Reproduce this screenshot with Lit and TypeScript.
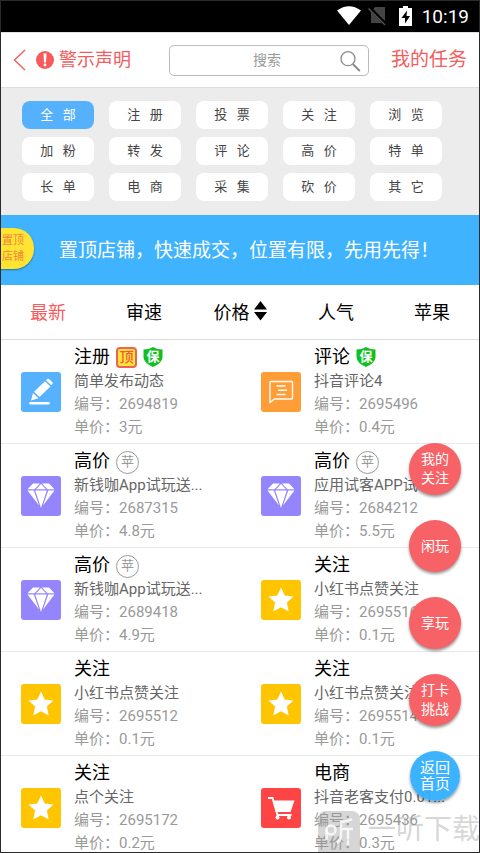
import { LitElement, html, css, svg, TemplateResult } from "lit";
import { customElement, property } from "lit/decorators.js";
import { classMap } from "lit/directives/class-map.js";

type Kind = "pencil" | "comment" | "gem" | "star" | "cart";
type Badge = "top" | "safe" | "apple";

interface Task {
  kind: Kind;
  title: string;
  badges: Badge[];
  desc: string;
  id: string;
  price: string;
}

const CATEGORIES = [
  "全部", "注册", "投票", "关注", "浏览",
  "加粉", "转发", "评论", "高价", "特单",
  "长单", "电商", "采集", "砍价", "其它",
];

const TASKS: Task[] = [
  { kind: "pencil", title: "注册", badges: ["top", "safe"], desc: "简单发布动态", id: "2694819", price: "3元" },
  { kind: "comment", title: "评论", badges: ["safe"], desc: "抖音评论4", id: "2695496", price: "0.4元" },
  { kind: "gem", title: "高价", badges: ["apple"], desc: "新钱咖App试玩送...", id: "2687315", price: "4.8元" },
  { kind: "gem", title: "高价", badges: ["apple"], desc: "应用试客APP试...", id: "2684212", price: "5.5元" },
  { kind: "gem", title: "高价", badges: ["apple"], desc: "新钱咖App试玩送...", id: "2689418", price: "4.9元" },
  { kind: "star", title: "关注", badges: [], desc: "小红书点赞关注", id: "2695516", price: "0.1元" },
  { kind: "star", title: "关注", badges: [], desc: "小红书点赞关注", id: "2695512", price: "0.1元" },
  { kind: "star", title: "关注", badges: [], desc: "小红书点赞关注", id: "2695514", price: "0.1元" },
  { kind: "star", title: "关注", badges: [], desc: "点个关注", id: "2695172", price: "0.2元" },
  { kind: "cart", title: "电商", badges: [], desc: "抖音老客支付0.01...", id: "2695436", price: "0.3元" },
];

const GLYPHS: Record<Kind, TemplateResult> = {
  pencil: svg`
    <path d="M10 28.500l2-7.500 5.500 5.200z" fill="#fff"/>
    <path d="M13 19.800L24 9.200l5.400 5.200L18.500 25z" fill="#fff"/>
    <path d="M25 8.200l1.200-1.100q.9-.8 1.800 0l3.400 3.200q.9.900 0 1.800l-1.100 1.200z" fill="#fff"/>
    <path d="M9.500 31.200h18" stroke="#fff" stroke-width="2.600" stroke-linecap="round"/>`,
  comment: svg`
    <path d="M10 9.500h20.500q1 0 1 1v15.500q0 1-1 1H13.500L9 30.500V10.500q0-1 1-1z" fill="none" stroke="#fff" stroke-width="1.400" stroke-linejoin="round"/>
    <path d="M15.500 14h9M17 18.200h9M15.500 22.400h9" stroke="#fff" stroke-width="1.500"/>`,
  gem: svg`
    <path d="M12 7.500h7l-5.500 5.700H6.500zM20 8l5 5.200H15zM21 7.500h7l5.500 5.700h-7zM6.500 14.600h6.300L18 29.500zM14.200 14.600h11.600L20 32zM27.200 14.600h6.300L22 29.500z" fill="#fff"/>`,
  star: svg`
    <path d="M20 7.500l3.700 8 8.800 1-6.600 6 1.800 9L20 27.200l-7.700 4.300 1.800-9-6.600-6 8.800-1z" fill="#fff"/>`,
  cart: svg`
    <path d="M7 10h4.500l5 17h14" fill="none" stroke="#fff" stroke-width="2"/>
    <path d="M12 12.500h21.500l-4 11.500H15.500z" fill="#fff"/>
    <circle cx="16.500" cy="29.600" r="2" fill="#fff"/><circle cx="28" cy="29.600" r="2" fill="#fff"/>`,
};

const FONT = css`Roboto, "Noto Sans CJK SC", sans-serif`;

@customElement("task-card")
export class TaskCard extends LitElement {
  @property({ attribute: false }) task!: Task;

  static styles = css`
    :host { display: flex; gap: 13px; padding: 4px 0 4px 21px; border-bottom: 1px solid #e8e8e8; min-width: 0; }
    .tile { flex: none; width: 40px; height: 40px; margin-top: 28px; border-radius: 3px; }
    .pencil { background: #56b1ff; }
    .comment { background: #ff9d36; }
    .gem { background: #9485fd; }
    .star { background: #ffc501; }
    .cart { background: #fe4444; }
    .info { min-width: 0; white-space: nowrap; }
    .head { display: flex; align-items: center; gap: 6px; height: 26px; }
    h2 { margin: 0; font: 400 18px/26px ${FONT}; color: #000; }
    p { margin: 0; font: 400 15px/23px ${FONT}; color: #999; }
    .desc { color: #666; }
    .badge { flex: none; box-sizing: border-box; font: 500 14px/17px ${FONT}; text-align: center; }
    .top { width: 21px; height: 21px; border: 2px solid #ef6352; border-radius: 4px; background: #ffe53b; color: #ee5b3f; }
    .apple { width: 23px; height: 23px; margin-top: 2px; border: 1px solid #999; border-radius: 50%; color: #999; font-size: 13px; font-weight: 400; line-height: 20px; }
    .safe { position: relative; width: 20px; height: 20px; color: #fff; font-size: 13px; line-height: 19px; font-weight: 700; }
    .safe svg { position: absolute; inset: 0; }
    .safe span { position: relative; }
  `;

  private badge(b: Badge) {
    if (b === "top") return html`<span class="badge top">顶</span>`;
    if (b === "apple") return html`<span class="badge apple">苹</span>`;
    return html`<span class="badge safe">
      <svg width="20" height="20" viewBox="0 0 20 20" aria-hidden="true"><path d="M10 0q4 2.500 9.500 2.500v8Q19 16 10 20 1 16 .5 10.500v-8Q6 2.500 10 0z" fill="#10c020"/></svg><span>保</span>
    </span>`;
  }

  render() {
    const t = this.task;
    return html`
      <svg class="tile ${t.kind}" viewBox="0 0 40 40" aria-hidden="true">${GLYPHS[t.kind]}</svg>
      <div class="info">
        <div class="head"><h2>${t.title}</h2>${t.badges.map((b) => this.badge(b))}</div>
        <p class="desc">${t.desc}</p>
        <p>编号：${t.id}</p>
        <p>单价：${t.price}</p>
      </div>`;
  }
}

@customElement("app-root")
export class AppRoot extends LitElement {
  static styles = css`
    :host { display: block; position: relative; height: 100vh; overflow: hidden; background: #fff; font-family: ${FONT}; color: #000; }
    :host::after { content: ""; position: absolute; inset: 0; border: 1px solid #2b2b2b; pointer-events: none; }
    button { border: 0; padding: 0; margin: 0; background: none; font: inherit; color: inherit; cursor: pointer; }
    button svg { display: block; }
    a { color: inherit; text-decoration: none; }
    .status { display: flex; align-items: center; justify-content: flex-end; height: 32px; padding-right: 11px; background: #000; color: #fff; font-size: 19px; }
    .status svg { flex: none; }
    .header { display: flex; align-items: center; box-sizing: border-box; height: 56px; padding: 0 13px; border-top: 1px solid #e0e0e0; border-bottom: 1px solid #dcdcdc; color: #f45c5e; }
    .warn { display: flex; align-items: center; gap: 5px; margin-left: 10px; font-size: 18px; line-height: 26px; }
    .search { position: relative; flex: 1; margin: 0 22px 0 38px; }
    .search input { display: block; box-sizing: border-box; width: 100%; height: 31px; padding: 0 32px 0 28px; border: 1px solid #bbb; border-radius: 5px; outline: 0; background: #fff; text-align: center; font: 400 14px/20px ${FONT}; }
    .search input::placeholder { color: #999; opacity: 1; }
    .search svg { position: absolute; right: 8px; top: 6px; }
    .mine { font-size: 19px; line-height: 28px; }
    .cats { display: grid; grid-template-columns: repeat(5, 1fr); gap: 8px 15px; padding: 13px 38px 14px 22px; background: #ececec; }
    .chip { height: 28px; border-radius: 8px; background: #fff; color: #444; font-size: 13px; line-height: 26px; }
    .chip.on { background: #56b1fc; color: #fff; }
    .banner { display: flex; align-items: center; box-sizing: border-box; height: 70px; padding-bottom: 3px; background: #40b3ff; color: #fff; font-size: 19px; white-space: nowrap; }
    .pin { box-sizing: border-box; width: 34px; height: 41px; margin-right: 25px; padding-left: 2px; border-radius: 0 20px 20px 0; background: #ffe433; color: #f0883a; font-size: 11px; line-height: 16px; text-align: left; box-shadow: 0 1px 2px rgba(0, 0, 0, 0.4); }
    .tabs { display: grid; grid-template-columns: repeat(5, 1fr); box-sizing: border-box; height: 55px; padding-bottom: 2px; border-bottom: 1px solid #dcdcdc; }
    .tab { display: flex; align-items: center; justify-content: center; gap: 4px; font-size: 18px; }
    .tab.on { color: #f45c5e; }
    .list { display: grid; grid-template-columns: repeat(2, minmax(0, 1fr)); }
    .floats { position: absolute; right: 19px; top: 443px; display: flex; flex-direction: column; align-items: center; gap: 25px; }
    .fab { width: 52px; height: 52px; border-radius: 50%; background: #f76266; color: #fff; font-size: 14px; line-height: 19px; box-shadow: 0 2px 3px rgba(0, 0, 0, 0.4); }
    .fab span { display: block; }
    .fab.home { width: 50px; height: 50px; background: rgba(50, 175, 255, 0.95); font-size: 15px; line-height: 16px; }
    .mark { position: absolute; right: 0; bottom: 0; display: flex; align-items: center; gap: 8px; height: 42px; color: rgba(150, 150, 150, 0.4); font-size: 28px; line-height: 38px; white-space: nowrap; }
    .mark span { padding-bottom: 4px; }
  `;

  render() {
    return html`
      <div class="status">
        <svg width="24" height="20" viewBox="0 0 24 20" aria-hidden="true"><path d="M0 4.500Q12-4 24 4.500L12 19z" fill="#fff"/></svg>
        <svg width="38" height="20" viewBox="0 0 38 20" aria-hidden="true"><path d="M14 1h10v16H10V6z" fill="#444"/><path d="M8 1.500L25 18.500" stroke="#000" stroke-width="3.500"/><path d="M7.500 2.500L24 19" stroke="#555" stroke-width="1.400"/></svg>
        <svg width="23" height="20" viewBox="0 0 23 20" aria-hidden="true"><path d="M4 0h5v2h4v18H0V2h4z" fill="#fff"/><path d="M8 4.500L2.500 12H6v5.500L11 10H7.500z" fill="#000"/></svg>
        <span>10:19</span>
      </div>
      <header class="header">
        <button aria-label="返回">
          <svg width="13" height="22" viewBox="0 0 13 22"><path d="M12 1L1.500 11 12 21" fill="none" stroke="#f45c5e" stroke-width="1.400"/></svg>
        </button>
        <a class="warn" href="#notice">
          <svg width="18" height="18" viewBox="0 0 18 18" aria-hidden="true"><circle cx="9" cy="9" r="9" fill="#f65a5c"/><path d="M7.500 2.500h3L10 11.500H8z" fill="#fff"/><circle cx="9" cy="14" r="1.400" fill="#fff"/></svg>
          警示声明
        </a>
        <label class="search">
          <input type="text" placeholder="搜索" aria-label="搜索" />
          <svg width="21" height="21" viewBox="0 0 21 21" fill="none" stroke="#8c8c8c" aria-hidden="true"><circle cx="8" cy="7.700" r="7" stroke-width="1.300"/><path d="M12.800 13l7 7" stroke-width="2"/></svg>
        </label>
        <a class="mine" href="#mine">我的任务</a>
      </header>
      <nav class="cats">
        ${CATEGORIES.map((c, i) => html`<button class=${classMap({ chip: true, on: i === 0 })}>${c[0]}\u00a0\u00a0\u00a0${c[1]}</button>`)}
      </nav>
      <section class="banner">
        <button class="pin">置顶<br />店铺</button>
        <span>置顶店铺，快速成交，位置有限，先用先得！</span>
      </section>
      <nav class="tabs">
        <button class="tab on">最新</button>
        <button class="tab">审速</button>
        <button class="tab">价格<svg width="13" height="20" viewBox="0 0 13 20" aria-hidden="true"><path d="M6.500 0L13 8.500H0zM0 11h13l-6.500 8.500z"/></svg></button>
        <button class="tab">人气</button>
        <button class="tab">苹果</button>
      </nav>
      <main class="list">${TASKS.map((t) => html`<task-card .task=${t}></task-card>`)}</main>
      <aside class="floats">
        <button class="fab"><span>我的</span><span>关注</span></button>
        <button class="fab">闲玩</button>
        <button class="fab">享玩</button>
        <button class="fab"><span>打卡</span><span>挑战</span></button>
        <button class="fab home"><span>返回</span><span>首页</span></button>
      </aside>
      <div class="mark">
        <svg width="42" height="42" viewBox="0 0 42 42" aria-hidden="true">
          <rect width="42" height="50" rx="8" fill="#999" fill-opacity=".4"/>
          <g fill="none" stroke="#fff" stroke-opacity=".8" stroke-width="2.500"><circle cx="13" cy="19" r="4.500"/><path d="M8.500 19v10M34 8q-5 3-11 3v12q0 6-4 9M23 18h12M30 18v16"/></g>
        </svg>
        <span>一听下载</span>
      </div>`;
  }
}
